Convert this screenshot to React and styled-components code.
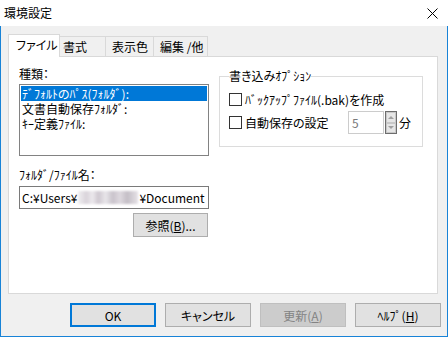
import React from "react";
import styled, { createGlobalStyle } from "styled-components";

const Global = createGlobalStyle`
  html, body { margin: 0; padding: 0; background: #ffffff; }
  body {
    font-family: "Noto Sans CJK JP", "Noto Sans", sans-serif;
    font-size: 12px;
    color: #000;
    font-feature-settings: "palt";
  }
  * { box-sizing: border-box; }
`;

const Window = styled.div`
  width: 448px;
  height: 337px;
  display: flex;
  flex-direction: column;
  background: #ffffff;
`;

const TitleBar = styled.div`
  height: 26px;
  flex: none;
  display: flex;
  align-items: center;
  justify-content: space-between;
  padding: 0 10px 0 4px;
  background: #ffffff;
  font-size: 12px;
  line-height: 16px;
`;

const Body = styled.div`
  flex: 1;
  display: flex;
  flex-direction: column;
  background: #f0f0f0;
  border: 1px solid #1883d7;
  border-top: none;
  padding: 8px 6px 9px 7px;
`;

const TabBar = styled.div`
  display: flex;
  align-items: flex-end;
  height: 23px;
  margin-bottom: -1px;
  position: relative;
  z-index: 1;
`;

const Tab = styled.div`
  width: ${(p) => p.$w}px;
  height: ${(p) => (p.$active ? 23 : 20)}px;
  margin-bottom: ${(p) => (p.$active ? 0 : 1)}px;
  background: ${(p) => (p.$active ? "#ffffff" : "#f0f0f0")};
  border: 1px solid #d9d9d9;
  border-bottom: none;
  border-left: ${(p) => (p.$active ? "1px solid #d9d9d9" : "none")};
  padding-left: ${(p) => p.$pad}px;
  display: flex;
  align-items: center;
  font-size: 12px;
  line-height: 16px;
  white-space: nowrap;
  overflow: hidden;
  padding-bottom: ${(p) => (p.$active ? 2 : 0)}px;
`;

const Panel = styled.div`
  height: 238px;
  width: 430px;
  background: #ffffff;
  border: 1px solid #d9d9d9;
  padding: 9px 0 0 10px;
  display: grid;
  grid-template-columns: 190px 204px;
  column-gap: 10px;
  align-items: start;
`;

const Column = styled.div`
  display: flex;
  flex-direction: column;
`;

const Label = styled.div`
  font-size: 12px;
  line-height: 16px;
  height: 16px;
  margin-top: ${(p) => p.$mt || 0}px;
  white-space: nowrap;
`;

const ListBox = styled.div`
  margin-top: 2px;
  height: 72px;
  border: 1px solid #828282;
  padding: 1px;
  background: #fff;
`;

const ListItem = styled.div`
  height: 15px;
  line-height: 15px;
  font-size: 12px;
  padding-left: 1px;
  white-space: nowrap;
  background: ${(p) => (p.$selected ? "#0078d7" : "transparent")};
  color: ${(p) => (p.$selected ? "#ffffff" : "#000000")};
`;

const TextField = styled.div`
  margin-top: 3px;
  height: 23px;
  border: 1px solid #7a7a7a;
  background: #fff;
  display: flex;
  align-items: center;
  padding-left: 2px;
  overflow: hidden;
  white-space: nowrap;
  font-size: 12px;
`;

const Blur = styled.span`
  display: inline-block;
  flex: none;
  width: ${(p) => p.$w}px;
  height: 13px;
  margin: 0 1px;
  background: linear-gradient(
    90deg,
    #f0eff1 0%,
    #d9d3da 14%,
    #ece9ed 24%,
    #cfc8d0 34%,
    #e8e6ea 46%,
    #c9c3cb 58%,
    #ded9df 70%,
    #c4bec6 82%,
    #e6e2e7 100%
  );
  filter: blur(1.2px);
`;

const Button = styled.div`
  width: ${(p) => p.$w}px;
  height: 24px;
  display: flex;
  align-items: center;
  justify-content: center;
  font-size: 12px;
  background: ${(p) => (p.$disabled ? "#cccccc" : "#e1e1e1")};
  border: ${(p) =>
    p.$default ? "2px solid #0078d7" : p.$disabled ? "1px solid #bfbfbf" : "1px solid #adadad"};
  color: ${(p) => (p.$disabled ? "#838383" : "#000000")};
  white-space: nowrap;
  align-self: ${(p) => p.$align || "auto"};
  margin-top: ${(p) => p.$mt || 0}px;
  margin-right: ${(p) => p.$mr || 0}px;
`;

const U = styled.span`
  text-decoration: underline;
`;

const Group = styled.fieldset`
  margin: 2px 0 0 0;
  border: 1px solid #dcdcdc;
  padding: 9px 0 0 9px;
  height: 79px;
  min-width: 0;
`;

const Legend = styled.legend`
  padding: 0;
  margin-left: 0;
  font-size: 12px;
  line-height: 16px;
  white-space: nowrap;
`;

const CheckRow = styled.div`
  display: flex;
  align-items: center;
  height: 13px;
  font-size: 12px;
  white-space: nowrap;
`;

const Box = styled.span`
  width: 13px;
  height: 13px;
  flex: none;
  border: 1px solid #333333;
  background: #fff;
  margin-right: 3px;
`;

const CheckText = styled.span`
  width: ${(p) => p.$w || "auto"};
  flex: none;
`;

const NumberField = styled.div`
  width: 36px;
  height: 23px;
  border: 1px solid #cccccc;
  background: #fff;
  color: #7a7a7a;
  display: flex;
  align-items: center;
  padding-left: 3px;
  font-size: 12px;
  flex: none;
`;

const Spinner = styled.div`
  width: 12px;
  height: 23px;
  margin-left: 1px;
  border: 1px solid #6d6d6d;
  display: flex;
  flex-direction: column;
  flex: none;
`;

const SpinBtn = styled.div`
  flex: 1;
  background: #e6e6e6;
  border: 1px solid #c8c8c8;
  display: flex;
  align-items: center;
  justify-content: center;
`;

const Unit = styled.span`
  margin-left: 2px;
`;

const AutoRow = styled.div`
  display: flex;
  align-items: center;
  margin-top: 5px;
  white-space: nowrap;
`;

const ButtonRow = styled.div`
  display: flex;
  justify-content: flex-end;
  gap: 9px;
  margin-top: 9px;
`;

const Arrow = ({ up }) => (
  <svg width="6" height="4" viewBox="0 0 6 4">
    <path d={up ? "M0 4 L3 1 L6 4 Z" : "M0 0 L3 3 L6 0 Z"} fill="#a0a0a0" />
  </svg>
);

export default function App() {
  return (
    <>
      <Global />
      <Window>
        <TitleBar>
          <span>環境設定</span>
          <svg width="11" height="11" viewBox="0 0 11 11">
            <path d="M0.5 0.5 L10.5 10.5 M10.5 0.5 L0.5 10.5" stroke="#000" strokeWidth="1" />
          </svg>
        </TitleBar>
        <Body>
          <TabBar>
            <Tab $active $w={52} $pad={7}>ファイル</Tab>
            <Tab $w={46} $pad={3}>書式</Tab>
            <Tab $w={48} $pad={6}>表示色</Tab>
            <Tab $w={54} $pad={6}>編集 /他</Tab>
          </TabBar>
          <Panel>
            <Column>
              <Label>種類：</Label>
              <ListBox>
                <ListItem $selected>ﾃﾞﾌｫﾙﾄのﾊﾟｽ(ﾌｫﾙﾀﾞ):</ListItem>
                <ListItem>文書自動保存ﾌｫﾙﾀﾞ:</ListItem>
                <ListItem>ｷｰ定義ﾌｧｲﾙ:</ListItem>
              </ListBox>
              <Label $mt={11}>ﾌｫﾙﾀﾞ/ﾌｧｲﾙ名：</Label>
              <TextField>
                C:¥Users¥<Blur $w={60} />¥Document
              </TextField>
              <Button $w={75} $align="flex-end" $mt={4} $mr={1}>
                参照(<U>B</U>)...
              </Button>
            </Column>
            <Column>
              <Group>
                <Legend>書き込みｵﾌﾟｼｮﾝ</Legend>
                <CheckRow>
                  <Box />
                  <CheckText>ﾊﾞｯｸｱｯﾌﾟﾌｧｲﾙ(.bak)を作成</CheckText>
                </CheckRow>
                <AutoRow>
                  <Box />
                  <CheckText $w="103px">自動保存の設定</CheckText>
                  <NumberField>5</NumberField>
                  <Spinner>
                    <SpinBtn><Arrow up /></SpinBtn>
                    <SpinBtn><Arrow /></SpinBtn>
                  </Spinner>
                  <Unit>分</Unit>
                </AutoRow>
              </Group>
            </Column>
          </Panel>
          <ButtonRow>
            <Button $w={86} $default>OK</Button>
            <Button $w={86}>キャンセル</Button>
            <Button $w={86} $disabled>更新(<U>A</U>)</Button>
            <Button $w={86}>ﾍﾙﾌﾟ(<U>H</U>)</Button>
          </ButtonRow>
        </Body>
      </Window>
    </>
  );
}
